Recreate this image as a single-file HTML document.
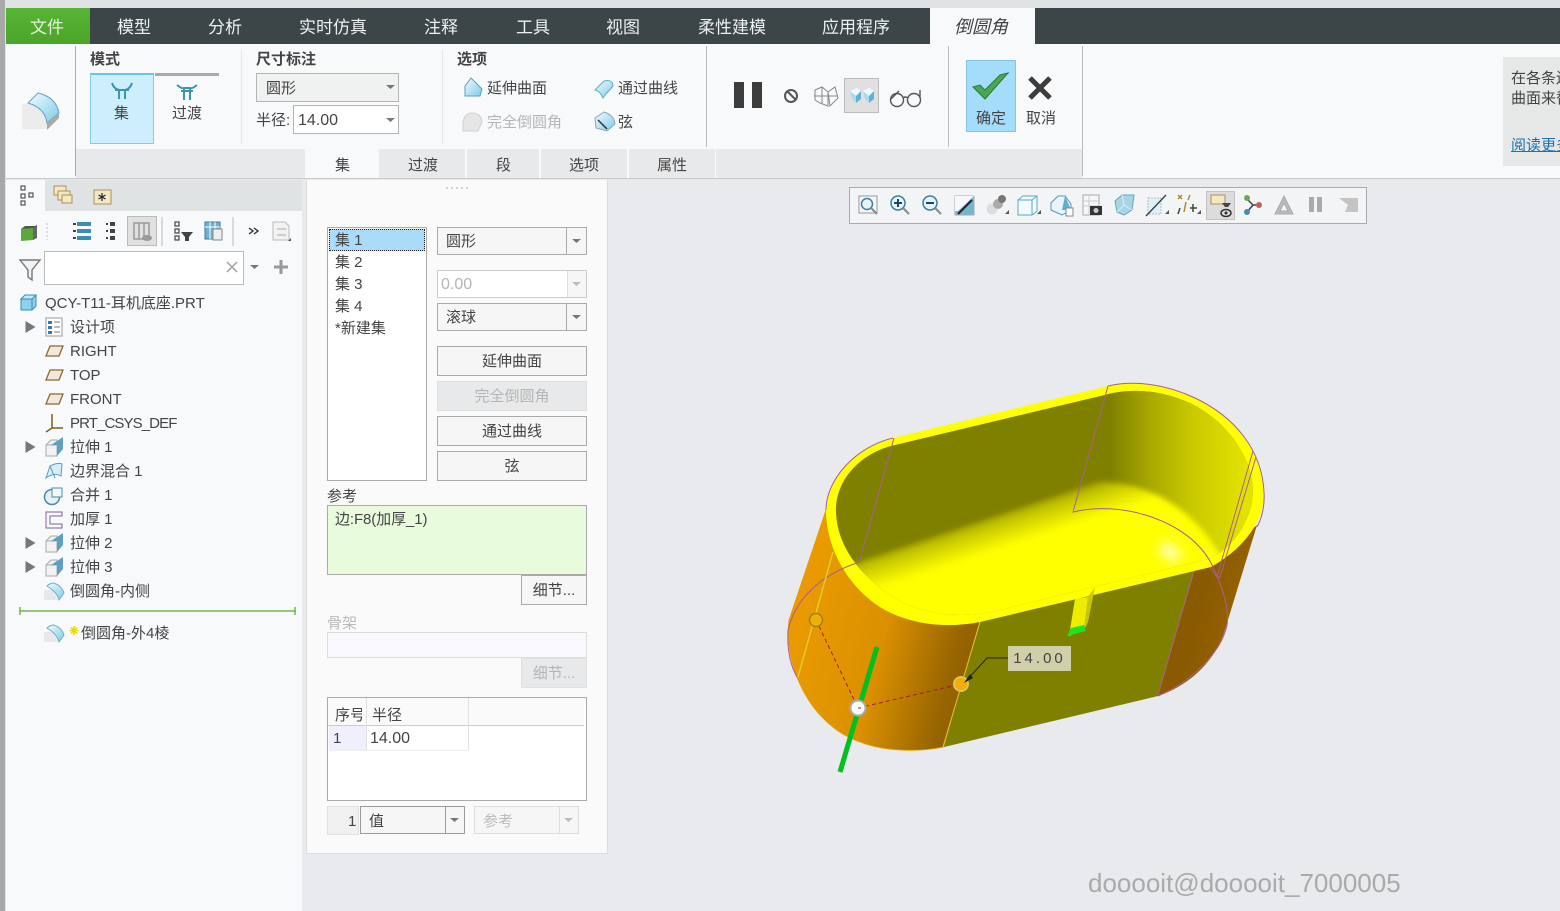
<!DOCTYPE html>
<html><head><meta charset="utf-8"><style>
html,body{margin:0;padding:0;width:1560px;height:911px;overflow:hidden;background:#e8eaed}
body{position:relative;font-family:"Liberation Sans","Noto Sans CJK SC",sans-serif;font-size:15px;color:#444}
.b{position:absolute;box-sizing:border-box}
.t{position:absolute;white-space:nowrap;line-height:20px}
.m{color:#eef0f0;font-size:17px;top:18px}
.r{font-size:15px;color:#444}
.c{text-align:center}
.btn{position:absolute;box-sizing:border-box;background:#f6f6f6;border:1px solid #aaa;text-align:center;color:#444;line-height:30px}
.dis{background:#e8e9ea;border-color:#e0e0e0;color:#b5b5b5}
svg{position:absolute;left:0;top:0}
</style></head><body>
<div class="b" style="left:0;top:0;width:1560px;height:8px;background:#dfe3e3"></div>
<div class="b" style="left:0;top:8px;width:1560px;height:36px;background:#3c4648"></div>
<div class="b" style="left:6px;top:8px;width:84px;height:36px;background:linear-gradient(#57b534,#4ca42a)"></div>
<div class="b" style="left:930px;top:8px;width:105px;height:36px;background:#f7f9fb"></div>
<div class="b" style="left:6px;top:44px;width:1554px;height:135px;background:#f7f9fb;border-bottom:1px solid #c8c8c8"></div>
<div class="b" style="left:76px;top:149px;width:1006px;height:29px;background:#e8e9ea"></div>
<div class="b" style="left:305px;top:149px;width:74px;height:29px;background:#f7f9fb"></div>
<div class="b" style="left:465px;top:149px;width:2px;height:29px;background:#f7f9fb"></div>
<div class="b" style="left:539px;top:149px;width:2px;height:29px;background:#f7f9fb"></div>
<div class="b" style="left:627px;top:149px;width:2px;height:29px;background:#f7f9fb"></div>
<div class="b" style="left:715px;top:149px;width:1px;height:29px;background:#f7f9fb"></div>
<div class="b" style="left:75px;top:46px;width:1px;height:130px;background:#aaa"></div>
<div class="b" style="left:241px;top:50px;width:1px;height:94px;background:#e6e6e6"></div>
<div class="b" style="left:442px;top:50px;width:1px;height:94px;background:#e6e6e6"></div>
<div class="b" style="left:706px;top:46px;width:1px;height:101px;background:#bbb"></div>
<div class="b" style="left:948px;top:46px;width:1px;height:101px;background:#bbb"></div>
<div class="b" style="left:1082px;top:46px;width:1px;height:130px;background:#bbb"></div>
<div class="b" style="left:90px;top:73px;width:64px;height:71px;background:#cdeefc;border:1px solid #85cbe2;border-top:2px solid #6cc4e4"></div>
<div class="b" style="left:155px;top:73px;width:64px;height:3px;background:#aaa"></div>
<div class="b" style="left:256px;top:73px;width:143px;height:29px;background:#f0f1f1;border:1px solid #b5b5b5"></div>
<div class="b" style="left:293px;top:105px;width:106px;height:29px;background:#fff;border:1px solid #b5b5b5"></div>
<div class="b" style="left:844px;top:78px;width:35px;height:35px;background:#e0e0e0;border:1px solid #bbb"></div>
<div class="b" style="left:966px;top:60px;width:50px;height:72px;background:#a5dcfb;border:1px solid #85c5e0"></div>
<div class="b" style="left:1503px;top:57px;width:57px;height:109px;background:#e6e8e8"></div>
<div class="b" style="left:0;top:0;width:5px;height:911px;background:#a8a8a8"></div>
<div class="b" style="left:5px;top:0;width:1px;height:911px;background:#e0e0e0"></div>

<div class="t" style="left:30px;top:18px;font-size:17px;color:#e6f2dc">文件</div>
<div class="t m" style="left:117px">模型</div>
<div class="t m" style="left:208px">分析</div>
<div class="t m" style="left:299px">实时仿真</div>
<div class="t m" style="left:424px">注释</div>
<div class="t m" style="left:516px">工具</div>
<div class="t m" style="left:606px">视图</div>
<div class="t m" style="left:698px">柔性建模</div>
<div class="t m" style="left:822px">应用程序</div>
<div class="t" style="left:954px;top:17px;font-size:18px;font-style:italic;color:#444">倒圆角</div>

<div class="t" style="left:90px;top:50px;font-weight:bold">模式</div>
<div class="t" style="left:256px;top:50px;font-weight:bold">尺寸标注</div>
<div class="t" style="left:457px;top:50px;font-weight:bold">选项</div>
<div class="t" style="left:114px;top:104px">集</div>
<div class="t" style="left:172px;top:104px">过渡</div>
<div class="t" style="left:266px;top:79px">圆形</div>
<div class="t" style="left:256px;top:111px;font-size:15px">半径:</div>
<div class="t" style="left:298px;top:111px;font-size:16px">14.00</div>
<div class="t" style="left:487px;top:79px">延伸曲面</div>
<div class="t" style="left:618px;top:79px">通过曲线</div>
<div class="t" style="left:487px;top:113px;color:#b5b5b5">完全倒圆角</div>
<div class="t" style="left:618px;top:113px">弦</div>
<div class="t" style="left:976px;top:109px">确定</div>
<div class="t" style="left:1026px;top:109px">取消</div>
<div class="t" style="left:1511px;top:69px">在各条边</div>
<div class="t" style="left:1511px;top:89px">曲面来替</div>
<div class="t" style="left:1511px;top:136px;color:#1a70b0;text-decoration:underline">阅读更多</div>
<div class="t" style="left:335px;top:156px">集</div>
<div class="t" style="left:408px;top:156px">过渡</div>
<div class="t" style="left:496px;top:156px">段</div>
<div class="t" style="left:569px;top:156px">选项</div>
<div class="t" style="left:657px;top:156px">属性</div>

<!-- left tree -->
<div class="b" style="left:6px;top:180px;width:296px;height:731px;background:#f7f9fb"></div>
<div class="b" style="left:6px;top:180px;width:296px;height:31px;background:#dfe3e3"></div>
<div class="b" style="left:6px;top:180px;width:39px;height:31px;background:#f7f9fb"></div>
<div class="b" style="left:127px;top:216px;width:30px;height:30px;background:#e0e0e0;border:1px solid #bbb"></div>
<div class="b" style="left:44px;top:251px;width:200px;height:34px;background:#fff;border:1px solid #bbb"></div>
<div class="t r" style="left:45px;top:294px">QCY-T11-耳机底座.PRT</div>
<div class="t r" style="left:70px;top:318px">设计项</div>
<div class="t r" style="left:70px;top:342px">RIGHT</div>
<div class="t r" style="left:70px;top:366px">TOP</div>
<div class="t r" style="left:70px;top:390px">FRONT</div>
<div class="t r" style="left:70px;top:414px;letter-spacing:-.9px">PRT_CSYS_DEF</div>
<div class="t r" style="left:70px;top:438px">拉伸 1</div>
<div class="t r" style="left:70px;top:462px">边界混合 1</div>
<div class="t r" style="left:70px;top:486px">合并 1</div>
<div class="t r" style="left:70px;top:510px">加厚 1</div>
<div class="t r" style="left:70px;top:534px">拉伸 2</div>
<div class="t r" style="left:70px;top:558px">拉伸 3</div>
<div class="t r" style="left:70px;top:582px">倒圆角-内侧</div>
<div class="t r" style="left:81px;top:624px">倒圆角-外4棱</div>

<!-- panel -->
<div class="b" style="left:306px;top:180px;width:302px;height:674px;background:#fafafa;border:1px solid #dcdcdc;border-top:0"></div>
<div class="b" style="left:327px;top:227px;width:100px;height:254px;background:#fff;border:1px solid #aaa"></div>
<div class="b" style="left:329px;top:229px;width:96px;height:22px;background:#aadcfa;border:1px dotted #222"></div>
<div class="t r" style="left:335px;top:231px">集 1</div>
<div class="t r" style="left:335px;top:253px">集 2</div>
<div class="t r" style="left:335px;top:275px">集 3</div>
<div class="t r" style="left:335px;top:297px">集 4</div>
<div class="t r" style="left:335px;top:319px">*新建集</div>
<div class="b" style="left:437px;top:227px;width:150px;height:28px;background:#f6f6f6;border:1px solid #aaa"></div>
<div class="b" style="left:566px;top:227px;width:1px;height:28px;background:#aaa"></div>
<div class="t" style="left:446px;top:232px">圆形</div>
<div class="b" style="left:437px;top:270px;width:150px;height:28px;background:#fff;border:1px solid #ccc"></div>
<div class="b" style="left:567px;top:271px;width:19px;height:26px;background:#f6f6f6;border-left:1px solid #ddd"></div>
<div class="t" style="left:441px;top:275px;font-size:16px;color:#b5b5b5">0.00</div>
<div class="b" style="left:437px;top:303px;width:150px;height:28px;background:#f6f6f6;border:1px solid #aaa"></div>
<div class="b" style="left:566px;top:303px;width:1px;height:28px;background:#aaa"></div>
<div class="t" style="left:446px;top:308px">滚球</div>
<div class="btn" style="left:437px;top:346px;width:150px;height:30px">延伸曲面</div>
<div class="btn dis" style="left:437px;top:381px;width:150px;height:30px">完全倒圆角</div>
<div class="btn" style="left:437px;top:416px;width:150px;height:30px">通过曲线</div>
<div class="btn" style="left:437px;top:451px;width:150px;height:30px">弦</div>
<div class="t" style="left:327px;top:487px">参考</div>
<div class="b" style="left:327px;top:505px;width:260px;height:70px;background:#e8fbdc;border:1px solid #aaa"></div>
<div class="t" style="left:335px;top:510px;letter-spacing:-.1px">边:F8(加厚_1)</div>
<div class="btn" style="left:521px;top:575px;width:66px;height:30px">细节...</div>
<div class="t" style="left:327px;top:614px;color:#bbb">骨架</div>
<div class="b" style="left:327px;top:632px;width:260px;height:26px;background:#f8f8fd;border:1px solid #ddd"></div>
<div class="btn dis" style="left:521px;top:658px;width:66px;height:30px">细节...</div>
<div class="b" style="left:327px;top:697px;width:260px;height:104px;background:#fff;border:1px solid #aaa"></div>
<div class="b" style="left:328px;top:698px;width:256px;height:28px;background:#fafafa;border-bottom:1px solid #ccc"></div>
<div class="b" style="left:366px;top:698px;width:1px;height:52px;background:#e0e0e0"></div>
<div class="b" style="left:468px;top:698px;width:1px;height:52px;background:#e0e0e0"></div>
<div class="b" style="left:329px;top:726px;width:37px;height:24px;background:#f0f0fc"></div>
<div class="b" style="left:329px;top:750px;width:140px;height:1px;background:#eee"></div>
<div class="t" style="left:335px;top:706px;width:27px;overflow:hidden">序号</div>
<div class="t" style="left:372px;top:706px;font-size:15px">半径</div>
<div class="t" style="left:333px;top:729px;font-size:15px">1</div>
<div class="t" style="left:370px;top:729px;font-size:16px">14.00</div>
<div class="b" style="left:327px;top:806px;width:32px;height:29px;background:#f0f0f0;border:1px solid #e0e0e0"></div>
<div class="t" style="left:348px;top:812px;font-size:15px">1</div>
<div class="b" style="left:360px;top:806px;width:105px;height:28px;background:#f6f6f6;border:1px solid #999"></div>
<div class="b" style="left:445px;top:806px;width:1px;height:28px;background:#999"></div>
<div class="t" style="left:369px;top:812px">值</div>
<div class="b" style="left:474px;top:806px;width:105px;height:28px;background:#f6f6f6;border:1px solid #ddd"></div>
<div class="b" style="left:559px;top:806px;width:1px;height:28px;background:#ddd"></div>
<div class="t" style="left:483px;top:812px;color:#bbb">参考</div>

<!-- view toolbar -->
<div class="b" style="left:849px;top:187px;width:518px;height:37px;background:#f2f4f6;border:1px solid #aaa"></div>
<div class="b" style="left:1206px;top:191px;width:29px;height:29px;background:#dcdcdc;border:1px solid #c4c4c4"></div>

<svg width="1560" height="911" viewBox="0 0 1560 911">
<defs>
<linearGradient id="or" gradientUnits="userSpaceOnUse" x1="795" y1="650" x2="975" y2="695"><stop offset="0" stop-color="#e89a00"/><stop offset=".45" stop-color="#da9000"/><stop offset=".85" stop-color="#966400"/><stop offset="1" stop-color="#8f5f00"/></linearGradient>
<linearGradient id="rt" gradientUnits="userSpaceOnUse" x1="1190" y1="640" x2="1250" y2="655"><stop offset="0" stop-color="#8a5a00"/><stop offset="1" stop-color="#9a6600"/></linearGradient>
<linearGradient id="fl" gradientUnits="userSpaceOnUse" x1="990" y1="505" x2="1004" y2="548"><stop offset="0" stop-color="#808000"/><stop offset=".5" stop-color="#caca00"/><stop offset="1" stop-color="#ffff00"/></linearGradient>
<linearGradient id="wl" gradientUnits="userSpaceOnUse" x1="1110" y1="450" x2="1245" y2="450"><stop offset="0" stop-color="#808000"/><stop offset=".3" stop-color="#a8a800"/><stop offset=".6" stop-color="#c8c800"/><stop offset="1" stop-color="#e2e200"/></linearGradient>
<linearGradient id="bl" x1="0" y1="0" x2="1" y2="1"><stop offset="0" stop-color="#f4fbfe"/><stop offset="1" stop-color="#7ccbe8"/></linearGradient>
<clipPath id="ci"><path d="M895,445 L1113,393 C1140,388 1165,392 1190,403 C1225,420 1252,455 1253,490 C1253,515 1238,543 1212,558 L1000,610 C960,620 920,615 890,595 C860,575 836,545 836,510 C836,480 860,453 895,445 Z"/></clipPath>
<filter id="f3" x="-20%" y="-20%" width="140%" height="140%"><feGaussianBlur stdDeviation="3"/></filter>
<filter id="f8" x="-100%" y="-100%" width="300%" height="300%"><feGaussianBlur stdDeviation="6"/></filter>
<g id="ext"><path d="M46,445 L51,440 H57 V456 H46 Z" fill="#f0f2f2" stroke="#aaa"/><path d="M46,445 H57 V456" fill="none" stroke="#aaa"/><path d="M51,445 L63,437 V449 L57,456 V445 Z" fill="#5f9fc0"/></g>
<g id="fil"><path d="M44,590 H53 L58,600 H44 Z" fill="#e8e8e8"/><path d="M47,586 Q50,583 54,583 Q62,586 64,593 L59,600 Q57,592 47,586 Z" fill="url(#bl)" stroke="#6aa8c0" stroke-width=".9"/></g>
<path id="tri" d="M0,0 L10,6 L0,12 Z" fill="#777"/>
<path id="dn" d="M0,0 H9 L4.500,4 Z" fill="#777"/>
<g id="pln"><path d="M46,356 L50,346 H63 L59,356 Z" fill="#f0e8d8" stroke="#8a6a30" stroke-width="1.300"/></g>
</defs>

<!-- Ribbon icons -->
<path d="M22,104 H40 L47,122 V129 H22 Z" fill="#ececec"/>
<path d="M28,103 L38,93 Q56,97 59,113 L47,123 Q45,108 28,103 Z" fill="url(#bl)" stroke="#6aa0b8"/>
<path d="M47,123 L59,113 V118 L47,130 Z" fill="#aaa"/>
<g fill="none" stroke="#3b95b0" stroke-width="2"><path d="M112,83 Q114,89 119,90 M132,83 Q130,89 125,90 M119,89 V99 M125,89 V99 M115,90 H129"/><path d="M177,85 Q182,89 184,88 H190 Q192,89 197,85 M181,91 H193 M184,88 V100 M190,88 V100"/></g>
<use href="#dn" x="386" y="85"/><use href="#dn" x="386" y="118"/>
<path d="M465,86 L471,78 L482,89 L480,96 L465,96 Z" fill="url(#bl)" stroke="#5f9fb8"/>
<path d="M595,90 L604,81 Q613,79 613,86 L606,94 L603,98 Q600,91 595,90 Z" fill="url(#bl)" stroke="#6aa8c0"/>
<path d="M463,131 V122 Q465,113 472,113 Q481,113 482,122 L478,131 Z" fill="#e6e6e6" stroke="#d0d0d0"/>
<path d="M595,118 L604,112 Q614,115 615,124 L607,131 L596,128 Z" fill="url(#bl)" stroke="#8ab"/><path d="M598,120 L607,129" stroke="#333" stroke-width="1.500"/>
<rect x="734" y="82" width="10" height="26" fill="#3c3c3c"/><rect x="752" y="82" width="10" height="26" fill="#3c3c3c"/>
<circle cx="791" cy="96" r="6" fill="none" stroke="#555" stroke-width="2"/><path d="M787,91 L796,100" stroke="#555" stroke-width="2"/>
<g fill="none" stroke="#888"><path d="M815,90 L822,87 L828,92 V106 L820,103 L815,100 Z M828,92 L835,87 L838,98 L830,106 Z M814,96 L838,96 M822,87 V103"/></g>
<path d="M850,91 L857,88 L861,91 L856,96 Z" fill="#f0fafd"/><path d="M850,91 L856,96 V103 L852,99 Z" fill="#a8dcec"/><path d="M861,91 V99 L856,103 V96 Z" fill="#5fb4d4"/>
<path d="M863,91 L869,88 L874,91 L869,96 Z" fill="#f0fafd"/><path d="M863,91 L869,96 V103 L865,99 Z" fill="#a8dcec"/><path d="M874,91 V99 L869,103 V96 Z" fill="#5fb4d4"/>
<g fill="none" stroke="#555" stroke-width="1.400"><circle cx="897" cy="100" r="6.500"/><circle cx="914" cy="100" r="6.500"/><path d="M903,98 Q905,96 908,98 M891,99 L899,91 M920,98 V90"/></g>
<path d="M973,87 L985,99 L1008,73 L1000,75 L985,90 L980,85 Z" fill="#4aa854" stroke="#2a7a34"/>
<path d="M1030,78 L1050,98 M1050,78 L1030,98" stroke="#3c3c3c" stroke-width="5"/>

<!-- tree tabs + tools -->
<g fill="none" stroke="#555" stroke-width="1.200"><rect x="21" y="186" width="4" height="4"/><rect x="21" y="194" width="4" height="4"/><rect x="21" y="201" width="4" height="4"/><rect x="29" y="193" width="4" height="4"/></g>
<rect x="54" y="186" width="12" height="9" fill="#f4e8c0" stroke="#a89060"/><rect x="58" y="191" width="12" height="9" fill="#f4e8c0" stroke="#a89060"/><rect x="62" y="195" width="10" height="8" fill="#f4e8c0" stroke="#a89060"/>
<rect x="94" y="190" width="17" height="14" fill="#f4e8c0" stroke="#a89060"/><path d="M102,193 V201 M98.500,195 L105.500,199 M105.500,195 L98.500,199" stroke="#224" stroke-width="1.200"/>
<path d="M21,229 L33,227 V240 L21,241 Z" fill="#5aa83a"/><path d="M33,227 L37,225 V238 L33,240 Z" fill="#666"/><path d="M21,229 L25,226 H37 L33,228 Z" fill="#555"/>
<path d="M47,223 V240" stroke="#bbb" stroke-dasharray="2 2"/>
<g fill="#3a8db5"><rect x="77" y="222" width="14" height="4"/><rect x="77" y="229" width="14" height="4"/><rect x="77" y="236" width="14" height="4"/></g><g fill="#444"><rect x="73" y="223" width="3" height="2"/><rect x="73" y="230" width="3" height="2"/><rect x="73" y="237" width="3" height="2"/><rect x="110" y="222" width="5" height="4"/><rect x="110" y="229" width="5" height="4"/><rect x="110" y="236" width="5" height="4"/><rect x="106" y="223" width="2" height="2"/><rect x="106" y="230" width="2" height="2"/><rect x="106" y="237" width="2" height="2"/></g>
<g fill="none" stroke="#999" stroke-width="1.500"><rect x="134" y="223" width="15" height="16"/><path d="M139,223 V239 M144,223 V239"/></g><ellipse cx="147" cy="238" rx="5" ry="3" fill="#999"/>
<path d="M162,217 V246 M233,217 V246" stroke="#bbb"/>
<g fill="none" stroke="#444" stroke-width="1.200"><rect x="175" y="222" width="4" height="4"/><rect x="175" y="229" width="4" height="4"/><rect x="175" y="236" width="4" height="4"/></g><path d="M181,232 H193 L189,237 V241 H185 V237 Z" fill="#444"/>
<rect x="205" y="222" width="15" height="17" fill="#6fb0d0" stroke="#3a7ea0"/><path d="M205,227 H220 M210,222 V239 M215,222 V239" stroke="#fff"/><rect x="213" y="229" width="9" height="11" fill="#eee" stroke="#888"/>
<path d="M249,228 L253,231 L249,234 M254,228 L258,231 L254,234" fill="none" stroke="#333" stroke-width="1.400"/>
<path d="M273,222 H285 L289,226 V240 H273 Z" fill="#f2f2f2" stroke="#bbb"/><path d="M277,229 H286 M277,235 H286" stroke="#aaa"/><path d="M291,241 H288 L291,238 Z" fill="#555"/>
<path d="M20,260 H40 L32,270 V280 L28,277 V270 Z" fill="#f2f2f2" stroke="#777" stroke-width="1.400"/>
<path d="M227,262 L237,272 M237,262 L227,272" stroke="#aaa" stroke-width="1.600"/>
<use href="#dn" x="250" y="265"/>
<path d="M274,267 H288 M281,260 V274" stroke="#999" stroke-width="3"/>

<!-- tree icons -->
<path d="M21,299 L25,295 H36 V306 L32,310 H21 Z" fill="#8fd0ea" stroke="#3a8db5"/><path d="M25,295 H36 L32,299 H21 Z M32,299 V310" fill="#c4ecf8" stroke="#3a8db5"/>
<use href="#tri" x="25.500" y="321"/><use href="#tri" x="25.500" y="441"/><use href="#tri" x="25.500" y="537"/><use href="#tri" x="25.500" y="561"/>
<rect x="46" y="318" width="16" height="18" fill="#fff" stroke="#999"/><g fill="#2f7fa8"><rect x="48" y="321" width="4" height="3"/><rect x="48" y="326" width="4" height="3"/><rect x="48" y="331" width="4" height="3"/></g><path d="M54,322 H60 M54,327 H60 M54,332 H60" stroke="#777"/>
<use href="#pln"/><use href="#pln" y="24"/><use href="#pln" y="48"/>
<path d="M52,414 V428 M52,428 L46,432 M52,428 H63" fill="none" stroke="#8a5a20" stroke-width="1.500"/>
<use href="#ext"/><use href="#ext" y="96"/><use href="#ext" y="120"/>
<path d="M46,478 L50,466 Q58,462 62,464 L61,476 Q54,472 46,478 Z M50,466 L55,478" fill="#d8eef6" stroke="#5f9fb8"/>
<circle cx="52" cy="497" r="7.500" fill="#e4f2f8" stroke="#4a8aa8" stroke-width="1.500"/><rect x="52" y="488" width="10" height="9" fill="#f4f6f8" stroke="#4a8aa8"/>
<path d="M46,512 H62 V516 H50 V524 H62 V528 H46 Z" fill="#f8f8f8" stroke="#8060a0"/>
<use href="#fil"/><use href="#fil" y="42"/>
<path d="M74,626 V635 M69.500,630.500 H78.500 M71,627.500 L77,633.500 M77,627.500 L71,633.500" stroke="#e6dc00" stroke-width="1.500"/>
<path d="M19,611 H296" stroke="#74b84c" stroke-width="1.500"/><path d="M20,607 V615 M295,607 V615" stroke="#74b84c" stroke-width="1.500"/>

<!-- panel dots, arrows -->
<path d="M446,188 H468" stroke="#aaa" stroke-dasharray="2 3"/>
<use href="#dn" x="572" y="239"/><use href="#dn" x="572" y="315"/><use href="#dn" x="450" y="818"/>
<path d="M572,282 H581 L576.500,286 Z M564,818 H573 L568.500,822 Z" fill="#bbb"/>

<!-- view toolbar icons -->
<rect x="859" y="196" width="18" height="17" fill="#f4f6f8" stroke="#999"/><circle cx="867" cy="204" r="5.500" fill="#e6f4fa" stroke="#3d7f9c" stroke-width="1.500"/><path d="M871,208 L877,214" stroke="#888" stroke-width="2"/>
<circle cx="898" cy="203" r="7" fill="#e6f4fa" stroke="#3d7f9c" stroke-width="1.500"/><path d="M894,203 H902 M898,199 V207" stroke="#246" stroke-width="2"/><path d="M903,208 L909,214" stroke="#888" stroke-width="2"/>
<circle cx="930" cy="203" r="7" fill="#e6f4fa" stroke="#3d7f9c" stroke-width="1.500"/><path d="M926,203 H934" stroke="#246" stroke-width="2"/><path d="M935,208 L941,214" stroke="#888" stroke-width="2"/>
<rect x="955" y="196" width="19" height="19" fill="#6fb8d0" stroke="#aaa"/><path d="M955,196 H974 L958,211 H955 Z" fill="#f4f8fa"/><path d="M958,214 L972,200" stroke="#223" stroke-width="2"/>
<circle cx="992" cy="209" r="5.500" fill="#ddd"/><circle cx="998" cy="204" r="5" fill="#aaa"/><circle cx="1002" cy="199" r="4" fill="#777"/><path d="M1009,214 H1005 L1009,210 Z" fill="#555"/>
<path d="M1018,200 L1023,196 H1037 V211 L1032,215 H1018 Z" fill="#f2fafd" stroke="#5fa8c4"/><path d="M1018,200 H1032 V215 M1032,200 L1037,196" fill="none" stroke="#5fa8c4"/><path d="M1041,214 H1037 L1041,210 Z" fill="#555"/>
<path d="M1051,203 L1058,196 H1065 L1071,204 V210 L1062,215 L1051,210 Z" fill="#e8f6fb" stroke="#4a9ab8"/><path d="M1065,196 L1071,210 H1062 Z" fill="#5fb0cc"/><rect x="1066" y="208" width="7" height="8" fill="#fff" stroke="#888"/>
<rect x="1083" y="195" width="16" height="20" fill="#f4f6f8" stroke="#aaa"/><path d="M1083,201 H1099 M1083,206 H1099 M1089,195 V215" stroke="#ccc"/><rect x="1090" y="206" width="12" height="9" fill="#333"/><circle cx="1096" cy="210.500" r="2.500" fill="#ccc"/>
<path d="M1115,201 L1122,195 H1134 L1132,210 L1124,215 L1117,212 Z" fill="#a8d4e4" stroke="#6ba4bc"/><path d="M1122,195 L1124,205 L1117,212 M1124,205 L1132,210" fill="none" stroke="#d8f0f8"/>
<path d="M1148,198 H1161 V214 H1148 Z" fill="#dff0f6" stroke="#bbb" stroke-dasharray="2 1"/><path d="M1146,216 L1166,195" stroke="#345" stroke-width="1.400"/><path d="M1169,214 H1165 L1169,210 Z" fill="#555"/>
<g stroke-width="1.500" fill="none"><path d="M1178,195 L1182,199 M1182,195 L1178,199 M1190,195 L1188,200 M1186,202 L1184,212" stroke="#b08a30"/><path d="M1190,208 H1197 M1193,204 V212 M1180,208 L1178,214" stroke="#443"/></g><path d="M1201,214 H1197 L1201,210 Z" fill="#555"/>
<rect x="1211" y="195" width="14" height="9" fill="#f4e8c0" stroke="#a89060"/><path d="M1222,203 H1231 L1228,207 H1225 Z" fill="#444"/><ellipse cx="1226" cy="213" rx="5" ry="3.500" fill="none" stroke="#333" stroke-width="1.500"/><circle cx="1226" cy="213" r="1.500" fill="#333"/>
<path d="M1247,199 L1253,205 L1247,212 M1253,205 H1259" fill="none" stroke="#444" stroke-width="1.500"/><circle cx="1247" cy="198" r="3" fill="#6aa860"/><circle cx="1247" cy="212" r="3" fill="#4a8ab0"/><circle cx="1259" cy="205" r="3" fill="#c06060"/>
<path d="M1284,196 L1275,214 H1293 Z M1284,203 L1280,211 H1288 Z" fill="#bbb" fill-rule="evenodd" stroke="#aaa"/>
<rect x="1309" y="197" width="5" height="15" fill="#aaa"/><rect x="1317" y="197" width="5" height="15" fill="#aaa"/>
<path d="M1339,198 H1358 V212 H1345 L1348,205 Z" fill="#c4c4c4"/>

<!-- 3D model -->
<path d="M826,510 L789,620 C783,665 810,725 860,742 C885,752 920,752 944,747 L980,622 L900,590 Z" fill="url(#or)" stroke="#e8a000" stroke-width=".8"/>
<path d="M980,618 L944,747 L1158,696 L1196,565 Z" fill="#808000"/>
<path d="M1196,565 L1158,696 C1190,685 1218,660 1227,623 L1257,525 L1240,540 Z" fill="url(#rt)"/>
<path d="M893,438 L1108,386 C1135,380 1165,384 1195,398 C1235,417 1262,450 1264,492 C1265,515 1250,545 1211,567 L980,622 C950,628 915,626 885,610 C850,590 826,550 826,510 C826,480 855,447 893,438 Z" fill="#ffff00"/>
<g clip-path="url(#ci)">
<rect x="820" y="380" width="450" height="250" fill="#808000"/>
<path d="M1108,385 H1270 V570 H1215 L1100,484 Z" fill="url(#wl)"/>
<path d="M800,578 L857,563 L1100,482 C1150,482 1195,510 1222,558 L1300,600 L1222,660 L800,660 Z" fill="url(#fl)" filter="url(#f3)"/>
<ellipse cx="1170" cy="552" rx="12" ry="7" fill="#ffffd0" filter="url(#f8)" transform="rotate(35 1170 552)"/>
</g>
<path d="M1069,636 L1075,599 L1088,597 L1084,630 Z" fill="#eded00"/>
<path d="M1088,597 L1095,587 L1088,622 L1084,630 Z" fill="#c8c800"/>
<path d="M1067,636 L1071,628 L1084,625 L1086,631 Z" fill="#20e020"/>
<g fill="none" stroke="#a8608c" stroke-width="1">
<path d="M826,510 C826,480 855,447 893,438"/>
<path d="M894,438 L860,560 L857,563 C820,575 795,600 788,630 C787,650 790,665 797,677"/>
<path d="M1108,386 C1135,380 1165,384 1195,398 C1235,417 1262,450 1264,492 C1265,505 1262,518 1257,527"/>
<path d="M1108,386 L1073,512 C1120,500 1190,520 1212,565 C1222,585 1230,610 1227,625 C1222,650 1195,680 1158,696"/>
<path d="M1193,573 L1158,695"/>
<path d="M1253,451 L1217,577 L1210,567 M1256,457 L1220,577 L1217,577"/>
</g>
<path d="M980,622 L943,747" stroke="#e8c040"/>
<path d="M833,552 L798,677" stroke="#e8c828" stroke-width="1.500"/>
<path d="M877,647 L840,772" stroke="#00c020" stroke-width="5"/>
<g fill="none" stroke="#a02020" stroke-width="1" stroke-dasharray="4 3"><path d="M816,620 L858,708 L961,684"/></g>
<circle cx="816" cy="620" r="6.500" fill="#f0b000" stroke="#a08020" stroke-width="1.500"/>
<circle cx="961" cy="684" r="7" fill="#f0b000" stroke="#e0c060" stroke-width="2"/>
<circle cx="858" cy="708" r="7.500" fill="#fff" stroke="#aaa" stroke-width="2"/><path d="M858,708 L861,708" stroke="#a02020"/>
<path d="M1008,658 H987 L966,681" fill="none" stroke="#222"/><path d="M964,683 L970,674 L973,678 Z" fill="#222"/>
</svg>
<div class="b" style="left:1008px;top:646px;width:63px;height:25px;background:#cfcfaa"></div>
<div class="t c" style="left:1008px;top:649px;width:63px;font-size:15px;letter-spacing:3px;color:#444">14.00</div>
<div class="t" style="left:1088px;top:868px;font-size:26px;line-height:30px;color:#aaa">dooooit@dooooit_7000005</div>
</body></html>
